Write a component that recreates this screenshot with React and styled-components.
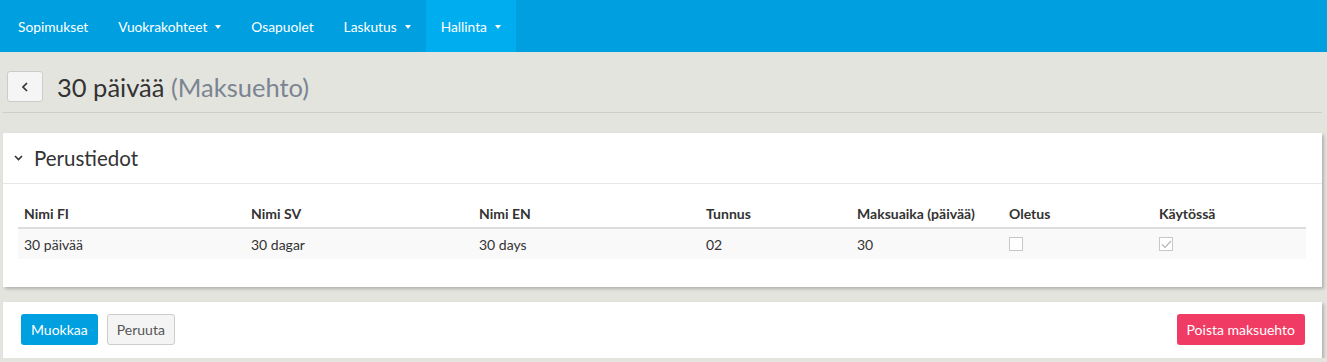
import React from "react";
import styled, { createGlobalStyle } from "styled-components";

const GlobalStyle = createGlobalStyle`
  html, body { margin: 0; padding: 0; }
  body {
    background: #e4e4df;
    font-family: Lato, "Open Sans", sans-serif;
    font-size: 14px;
    color: #333;
  }
`;

const NavBar = styled.nav`
  display: flex;
  height: 52px;
  background: #009fe0;
  padding-left: 3px;
`;

const NavItem = styled.div`
  display: flex;
  align-items: center;
  padding: 0 15px;
  color: #fff;
  font-size: 13.75px;
  background: ${(p) => (p.$active ? "#00aef0" : "transparent")};
`;

const Caret = styled.span`
  display: inline-block;
  width: 0;
  height: 0;
  margin-left: 8px;
  margin-top: 2px;
  border-left: 3.5px solid transparent;
  border-right: 3.5px solid transparent;
  border-top: 4px solid #fff;
`;

const Page = styled.div`
  padding: 0 5px 0 3px;
`;

const PageHeader = styled.div`
  display: flex;
  align-items: center;
  gap: 14px;
  padding: 19px 0 10px 4px;
  border-bottom: 1px solid #cfcfca;
`;

const BackButton = styled.button`
  display: flex;
  align-items: center;
  justify-content: center;
  width: 36px;
  height: 31px;
  padding: 0;
  background: #f5f5f5;
  border: 1px solid #cccccc;
  border-radius: 3px;
`;

const Title = styled.h1`
  margin: 0;
  font-size: 25.5px;
  line-height: 30px;
  font-weight: 400;
  color: #333;
`;

const SubTitle = styled.span`
  color: #7b8591;
`;

const Card = styled.section`
  background: #fff;
  box-shadow: 2px 2px 3px rgba(0, 0, 0, 0.22);
  margin-top: ${(p) => p.$top}px;
`;

const CardHeader = styled.div`
  display: flex;
  align-items: center;
  gap: 11px;
  height: 50px;
  padding-left: 11px;
  border-bottom: 1px solid #e6e6e6;
  font-size: 20.5px;
  color: #333;
`;

const CardBody = styled.div`
  padding: 15px 16px 28px 15px;
`;

const Table = styled.table`
  width: 100%;
  border-collapse: collapse;
  table-layout: fixed;
`;

const Th = styled.th`
  text-align: left;
  font-weight: 700;
  height: 28px;
  padding: 0 6px;
  border-bottom: 2px solid #dddddd;
  color: #333;
`;

const Td = styled.td`
  height: 30px;
  padding: 0 6px;
  background: #f9f9f9;
  color: #333;
`;

const CheckBox = styled.span`
  display: inline-flex;
  align-items: center;
  justify-content: center;
  width: 12px;
  height: 12px;
  border: 1px solid #c8c8c8;
  background: #fff;
  vertical-align: middle;
  margin-top: -3px;
`;

const Footer = styled.div`
  display: flex;
  align-items: center;
  gap: 9px;
  padding: 12px 17px 13px 18px;
`;

const Button = styled.button`
  height: 31px;
  padding: 0 9px;
  font-family: inherit;
  font-size: 14px;
  border-radius: 3px;
  border: 1px solid ${(p) => (p.$variant === "default" ? "#cccccc" : "transparent")};
  background: ${(p) =>
    p.$variant === "primary" ? "#009fe0" : p.$variant === "danger" ? "#f03c64" : "#f4f4f4"};
  color: ${(p) => (p.$variant === "default" ? "#555" : "#fff")};
  margin-left: ${(p) => (p.$push ? "auto" : "0")};
`;

const navItems = [
  { label: "Sopimukset" },
  { label: "Vuokrakohteet", caret: true },
  { label: "Osapuolet" },
  { label: "Laskutus", caret: true },
  { label: "Hallinta", caret: true, active: true },
];

const columns = [
  { label: "Nimi FI", w: 227 },
  { label: "Nimi SV", w: 228 },
  { label: "Nimi EN", w: 227 },
  { label: "Tunnus", w: 151 },
  { label: "Maksuaika (päivää)", w: 152 },
  { label: "Oletus", w: 150 },
  { label: "Käytössä" },
];

export default function App() {
  return (
    <>
      <GlobalStyle />
      <NavBar>
        {navItems.map((n) => (
          <NavItem key={n.label} $active={n.active}>
            {n.label}
            {n.caret && <Caret />}
          </NavItem>
        ))}
      </NavBar>
      <Page>
        <PageHeader>
          <BackButton aria-label="back">
            <svg width="8" height="12" viewBox="0 0 8 12">
              <path d="M6 2 L2 6 L6 10" fill="none" stroke="#333" strokeWidth="1.7" />
            </svg>
          </BackButton>
          <Title>
            30 päivää <SubTitle>(Maksuehto)</SubTitle>
          </Title>
        </PageHeader>
        <Card $top={20}>
          <CardHeader>
            <svg width="9" height="6" viewBox="0 0 9 6">
              <path d="M1 1 L4.5 4.5 L8 1" fill="none" stroke="#333" strokeWidth="1.6" />
            </svg>
            Perustiedot
          </CardHeader>
          <CardBody>
            <Table>
              <colgroup>
                {columns.map((c) => (
                  <col key={c.label} style={c.w ? { width: c.w } : undefined} />
                ))}
              </colgroup>
              <thead>
                <tr>
                  {columns.map((c) => (
                    <Th key={c.label}>{c.label}</Th>
                  ))}
                </tr>
              </thead>
              <tbody>
                <tr>
                  <Td>30 päivää</Td>
                  <Td>30 dagar</Td>
                  <Td>30 days</Td>
                  <Td>02</Td>
                  <Td>30</Td>
                  <Td>
                    <CheckBox />
                  </Td>
                  <Td>
                    <CheckBox>
                      <svg width="11" height="9" viewBox="0 0 11 9">
                        <path d="M1 4.5 L4 7.5 L10 1" fill="none" stroke="#b5b5b5" strokeWidth="1.2" />
                      </svg>
                    </CheckBox>
                  </Td>
                </tr>
              </tbody>
            </Table>
          </CardBody>
        </Card>
        <Card $top={15}>
          <Footer>
            <Button $variant="primary">Muokkaa</Button>
            <Button $variant="default">Peruuta</Button>
            <Button $variant="danger" $push>
              Poista maksuehto
            </Button>
          </Footer>
        </Card>
      </Page>
    </>
  );
}
